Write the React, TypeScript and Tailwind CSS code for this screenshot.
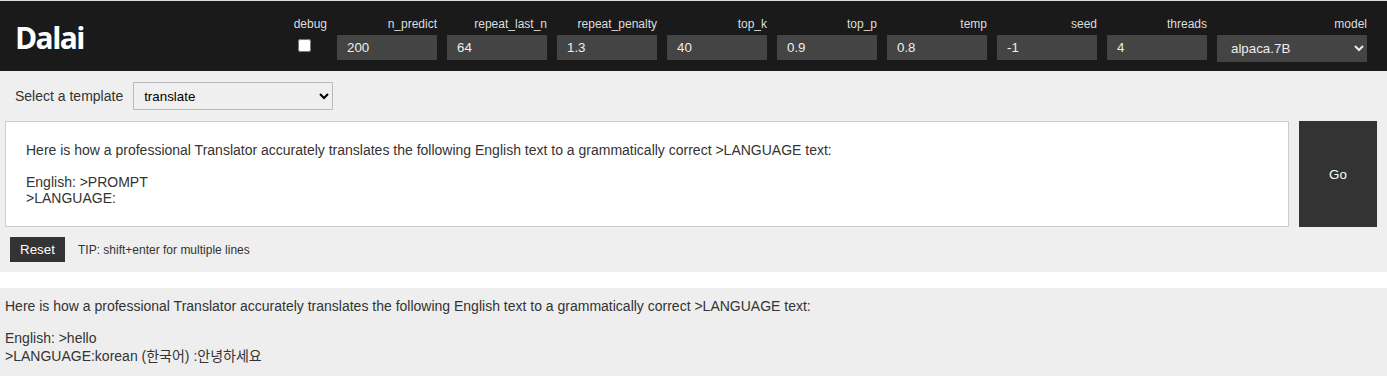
import React from "react";

const fields: { label: string; value: string }[] = [
  { label: "n_predict", value: "200" },
  { label: "repeat_last_n", value: "64" },
  { label: "repeat_penalty", value: "1.3" },
  { label: "top_k", value: "40" },
  { label: "top_p", value: "0.9" },
  { label: "temp", value: "0.8" },
  { label: "seed", value: "-1" },
  { label: "threads", value: "4" },
];

const templateText =
  "Here is how a professional Translator accurately translates the following English text to a grammatically correct >LANGUAGE text:\n\nEnglish: >PROMPT\n>LANGUAGE:";

export default function App() {
  return (
    <div
      className="min-h-[384px] bg-white text-[#333]"
      style={{ fontFamily: '"Liberation Sans", Arial, "Noto Sans CJK KR", sans-serif' }}
    >
      <div className="h-px bg-[#dcdcdc]" />
      <header className="flex h-[70px] items-start justify-between bg-[#1a1a1a] pl-[15px] pr-[20px]">
        <div
          className="mt-[17px] text-[30px] leading-[40px] font-bold text-white tracking-[-1.6px]"
          style={{ fontFamily: '"Open Sans", "Noto Sans", sans-serif' }}
        >
          Dalai
        </div>
        <div className="mt-[16px] flex gap-[10px]">
          <div className="flex flex-col">
            <label className="block text-right text-[12px] leading-[14px] text-[#ddd]">debug</label>
            <div className="mt-[4px]">
              <input type="checkbox" className="m-0 ml-[4px] mt-[2px] h-[13px] w-[13px]" />
            </div>
          </div>
          {fields.map((f) => (
            <div key={f.label} className="flex w-[100px] flex-col">
              <label className="block text-right text-[12px] leading-[14px] text-[#ddd]">{f.label}</label>
              <input
                type="text"
                defaultValue={f.value}
                className="mt-[4px] block h-[25px] w-[100px] bg-[#444] px-[10px] text-[13.333px] text-[#eee] outline-none"
              />
            </div>
          ))}
          <div className="flex w-[150px] flex-col">
            <label className="block text-right text-[12px] leading-[14px] text-[#ddd]">model</label>
            <select
              defaultValue="alpaca.7B"
              className="mt-[4px] block h-[27px] w-[150px] bg-[#444] pl-[10px] text-[13.333px] text-[#eee] outline-none"
            >
              <option value="alpaca.7B">alpaca.7B</option>
            </select>
          </div>
        </div>
      </header>

      <section className="bg-[#efefef] pb-[10px]">
        <div className="flex items-center pl-[15px] pt-[11px]">
          <span className="text-[14px] text-[#333]">Select a template</span>
          <select
            defaultValue="translate"
            className="ml-[10px] h-[28px] w-[200px] border border-[#bbb] pl-[6px] text-[13.333px] text-black outline-none"
          >
            <option value="translate">translate</option>
          </select>
        </div>
        <div className="mt-[11px] flex gap-[10px] pl-[5px] pr-[10px]">
          <textarea
            defaultValue={templateText}
            className="h-[106px] flex-1 resize-none border border-[#ccc] bg-white p-[20px] text-[14px] leading-[16px] text-[#333] outline-none"
          />
          <button className="h-[106px] w-[78px] bg-[#333] pt-px text-[13.333px] text-white">Go</button>
        </div>
        <div className="mt-[10px] flex items-center pl-[10px]">
          <button className="h-[25px] w-[55px] bg-[#333] text-[13.333px] text-white">Reset</button>
          <span className="ml-[13px] text-[12px] text-[#333]">TIP: shift+enter for multiple lines</span>
        </div>
      </section>

      <div className="h-[16px]" />

      <section className="bg-[#eee] px-[5px] py-[10px] text-[14px] text-[#333]">
        <div className="leading-[16px]">
          Here is how a professional Translator accurately translates the following English text to a grammatically correct &gt;LANGUAGE text:
        </div>
        <div className="h-[16px]" />
        <div className="leading-[16px]">English: &gt;hello</div>
        <div className="leading-[20px]">&gt;LANGUAGE:korean (한국어) :안녕하세요</div>
      </section>
    </div>
  );
}
